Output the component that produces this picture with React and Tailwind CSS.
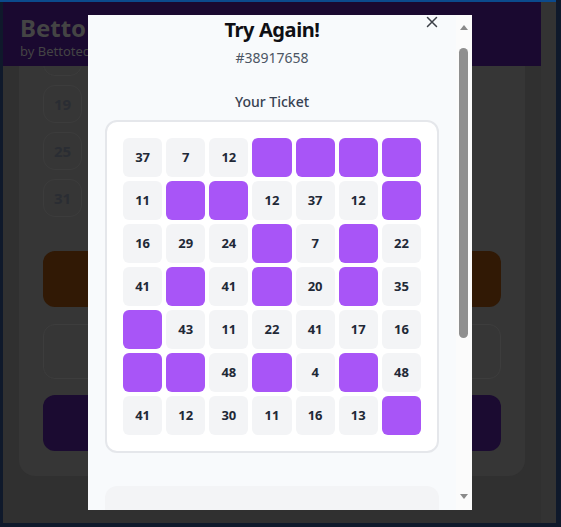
import React from "react";

const P = null;
const rows = [
  [37, 7, 12, P, P, P, P],
  [11, P, P, 12, 37, 12, P],
  [16, 29, 24, P, 7, P, 22],
  [41, P, 41, P, 20, P, 35],
  [P, 43, 11, 22, 41, 17, 16],
  [P, P, 48, P, 4, P, 48],
  [41, 12, 30, 11, 16, 13, P],
];

function BgCell({ n }) {
  return (
    <div className="w-[39px] h-[38px] rounded-xl border border-[#3c3c3c] flex items-center justify-center text-[15px] font-bold text-[#2a2d33]">
      {n}
    </div>
  );
}

export default function App() {
  return (
    <div
      className="relative w-[561px] h-[527px] overflow-hidden bg-[#0f192b]"
      style={{ fontFamily: '"Noto Sans", "Open Sans", sans-serif' }}
    >
      <div className="h-[2px] w-[556px] bg-[#0b4a8c]" />
      <div className="ml-[3px] w-[553px] h-[521px] bg-[#303030] flex">
        <div className="w-[538px] flex flex-col overflow-hidden">
          <div className="h-[64px] shrink-0 bg-[#1a0930] pl-[17px] pt-[11px]">
            <div className="text-[24px] leading-[30px] font-bold text-[#444444]">Betto Bingo</div>
            <div className="text-[13px] leading-[17px] text-[#444444]">by Bettotech</div>
          </div>
          <div className="relative mx-4 h-[410px] bg-[#363636] rounded-b-2xl px-6 overflow-hidden">
            <div className="flex flex-col gap-[9px] -mt-[28px]">
              <BgCell n="13" />
              <BgCell n="19" />
              <BgCell n="25" />
              <BgCell n="31" />
            </div>
            <div className="mt-[34px] h-[56px] rounded-xl bg-[#311905]" />
            <div className="mt-[17px] h-[55px] rounded-xl border border-[#3d3d3d]" />
            <div className="mt-[16px] h-[56px] rounded-xl bg-[#1b0b31]" />
          </div>
        </div>
        <div className="w-[15px] bg-[#333333]" />
      </div>

      {/* Modal */}
      <div className="absolute left-[88px] top-[15px] w-[384px] h-[495px] bg-[#f8fafc] flex overflow-hidden">
        <div className="w-[368px] h-full overflow-hidden px-[17px] pt-[1px]">
          <div className="text-center text-[20px] leading-[28px] font-bold tracking-[-0.4px] text-[#0f0f14]">Try Again!</div>
          <div className="mt-[4px] text-center text-[14px] leading-[20px] text-[#4b5563]">#38917658</div>
          <div className="mt-[24px] text-center text-[14px] leading-[20px] font-medium text-[#374151]">Your Ticket</div>
          <div className="mt-[8px] bg-white border-2 border-[#e5e7eb] rounded-xl p-4">
            <div className="grid grid-cols-7 gap-[4px]">
              {rows.flat().map((v, i) =>
                v === null ? (
                  <div key={i} className="h-[39px] rounded-md bg-[#a855f7]" />
                ) : (
                  <div
                    key={i}
                    className="h-[39px] rounded-md bg-[#f3f4f6] flex items-center justify-center text-[13px] font-bold text-[#1f2937]"
                  >
                    {v}
                  </div>
                )
              )}
            </div>
          </div>
          <div className="mt-[33px] h-[80px] rounded-xl bg-[#f3f4f6]" />
        </div>
        <div className="w-[16px] h-full bg-[#fbfbfb] relative">
          <div className="absolute left-[4px] top-[10px] w-0 h-0 border-l-[4px] border-r-[4px] border-b-[5px] border-l-transparent border-r-transparent border-b-[#8a8a8a]" />
          <div className="absolute left-[3px] top-[33px] w-[9px] h-[290px] rounded-full bg-[#8f8f8f]" />
          <div className="absolute left-[4px] top-[479px] w-0 h-0 border-l-[4px] border-r-[4px] border-t-[5px] border-l-transparent border-r-transparent border-t-[#8a8a8a]" />
        </div>
        <button className="absolute left-[338px] top-[1px] w-[12px] h-[12px] flex items-center justify-center">
          <svg width="12" height="12" viewBox="0 0 12 12" fill="none" stroke="#3b3f47" strokeWidth="1.5" strokeLinecap="round">
            <path d="M1.5 1.5 L10.5 10.5 M10.5 1.5 L1.5 10.5" />
          </svg>
        </button>
      </div>
    </div>
  );
}
